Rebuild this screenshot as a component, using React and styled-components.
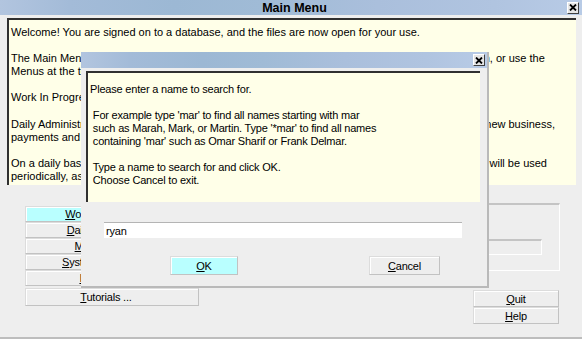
import React from "react"
import styled, {createGlobalStyle} from "styled-components"

const GlobalStyle = createGlobalStyle`
  html, body {
    margin: 0;
    padding: 0;
  }
  body {
    background: #eeeeee;
    font-family: "Liberation Sans", Arial, sans-serif;
    font-size: 11px;
    color: #000;
  }
`

const Window = styled.div`
  position: relative;
  display: flex;
  flex-direction: column;
  box-sizing: border-box;
  width: 582px;
  height: 339px;

  background: #eeeeee;
  border-bottom: 2px solid #bdbdbd;
`
const TitleBar = styled.div`
  display: flex;
  align-items: center;
  flex-shrink: 0;
  height: ${({$h}) => $h || 15}px;
  padding-right: ${({$pr}) => $pr || 3}px;

  background: linear-gradient(90deg, #b2c5df 0%, #a3bbd8 12%, #9cb8d4 30%, #a0bbd6 45%, #aabfdc 65%, #b0c4e0 85%, #b8cbe6 100%);
`
const Title = styled.div`
  flex: 1;
  padding-left: 22px;

  text-align: center;
  font-size: 12.5px;
  font-weight: bold;
`
const CloseButton = styled.div`
  display: flex;
  align-items: center;
  justify-content: center;
  box-sizing: border-box;
  width: 12px;
  height: 12px;

  background: #e6e6e6;
  border-top: 1px solid #ffffff;
  border-left: 1px solid #ffffff;
  border-right: 1px solid #404040;
  border-bottom: 1px solid #404040;
`
const TextPanel = styled.div`
  box-sizing: border-box;
  height: ${({$h}) => $h}px;
  width: ${({$w}) => $w}px;
  margin: ${({$m}) => $m};
  padding: ${({$p}) => $p};
  overflow: hidden;

  background: #ffffe8;
  border-top: 2px solid #303030;
  border-left: 2px solid #303030;

  line-height: ${({$lh}) => $lh || 13}px;
  white-space: ${({$pre}) => $pre ? "pre" : "nowrap"};
  letter-spacing: ${({$ls}) => $ls || 0}px;
`
const Para = styled.p`
  margin: 0 0 13.1px;
`
const Lower = styled.div`
  display: flex;
  flex: 1;
`
const ButtonColumn = styled.div`
  display: flex;
  flex-direction: column;
  width: ${({$w}) => $w}px;
  margin: ${({$m}) => $m};
`
const Button = styled.div`
  display: flex;
  align-items: center;
  justify-content: center;
  box-sizing: border-box;
  width: ${({$w}) => $w ? `${$w}px` : "auto"};
  height: ${({$h}) => $h || 16}px;
  margin-top: ${({$mt}) => $mt || 0}px;
  padding-right: ${({$pr}) => $pr || 0}px;

  background: ${({$active}) => $active ? "#b9ffff" : "#eeeeee"};
  border: 1px solid #c2c2c2;
  border-top-color: #dcdcdc;
  border-left-color: #dcdcdc;
  box-shadow: inset 1px 1px 0 #ffffff;

  white-space: nowrap;
  letter-spacing: -0.2px;
`
const RightArea = styled.div`
  display: flex;
  flex-direction: column;
  align-items: flex-end;
  flex: 1;
  margin-left: 11px;
  padding-right: 22px;
`
const Frame = styled.div`
  display: flex;
  flex-direction: column;
  align-items: flex-end;
  box-sizing: border-box;
  width: 100%;
  height: 68px;
  margin-top: 18px;
  padding-right: 17px;

  border-top: 2px solid #c4c4c4;
  border-left: 2px solid #c4c4c4;
  border-right: 1px solid #ffffff;
  border-bottom: 1px solid #ffffff;
`
const StatusBox = styled.div`
  box-sizing: border-box;
  width: 300px;
  height: 16px;
  margin-top: 34px;

  border-top: 2px solid #c4c4c4;
  border-left: 2px solid #c4c4c4;
  border-right: 1px solid #ffffff;
  border-bottom: 1px solid #ffffff;
`
const Dialog = styled.div`
  position: absolute;
  left: 81px;
  top: 52px;
  display: flex;
  flex-direction: column;
  box-sizing: border-box;
  width: 408px;
  height: 236px;

  background: #eeeeee;
  border-right: 2px solid #b9b9b9;
  border-bottom: 2px solid #b9b9b9;
`
const NameInput = styled.input`
  box-sizing: border-box;
  width: 358px;
  height: 16px;
  margin: 20px 0 0 23px;
  padding: 0 0 0 2px;

  background: #ffffff;
  border: none;
  border-top: 1px solid #b4b4b4;
  outline: none;

  font-family: "Liberation Sans", Arial, sans-serif;
  font-size: 11px;
  letter-spacing: -0.2px;
`
const DialogButtons = styled.div`
  display: flex;
  gap: 131px;
  margin-top: 18px;
  padding-left: 89px;
`

const CloseIcon = () => (
  <svg width="8" height="7" viewBox="0 0 8 7">
    <path d="M1 0.5 L7 6.5 M7 0.5 L1 6.5" stroke="#000" strokeWidth="1.8" />
  </svg>
)

const menuButtons = [
  {label: "Work In Progress", active: true},
  {label: "Daily Processing"},
  {label: "Month End ..."},
  {label: "System Settings ..."},
  {label: "Invoicing ..."},
]

const Label = ({text}) => (
  <span><u>{text[0]}</u>{text.slice(1)}</span>
)

const App = () => {
  return (
    <>
      <GlobalStyle />
      <Window>
        <TitleBar>
          <Title>Main Menu</Title>
          <CloseButton><CloseIcon /></CloseButton>
        </TitleBar>
        <TextPanel $w={569} $h={167} $m="3px 0 0 7px" $p="6px 0 0 2px" $lh={13.1}>
          <Para>Welcome! You are signed on to a database, and the files are now open for your use.</Para>
          <Para>
            The Main Menu buttons below give you access to all of the areas of the program. Click on a button, or use the<br />
            Menus at the top of the screen to move around.
          </Para>
          <Para>Work In Progress shows the jobs that are currently open.</Para>
          <Para>
            Daily Administration is used for the day to day activity of your insurance agency, such as entering new business,<br />
            payments and claims.
          </Para>
          <Para>
            On a daily basis you will mostly use Daily Administration. The other areas of the software program will be used<br />
            periodically, as needed.
          </Para>
        </TextPanel>
        <Lower>
          <ButtonColumn $w={174} $m="21px 0 0 25px">
            {menuButtons.map(b => (
              <Button key={b.label} $active={b.active} $pr={12}><Label text={b.label} /></Button>
            ))}
            <Button $h={18} $mt={2} $pr={12}><Label text="Tutorials ..." /></Button>
          </ButtonColumn>
          <RightArea>
            <Frame>
              <StatusBox />
            </Frame>
            <ButtonColumn $w={86} $m="19px 1px 0 0">
              <Button $h={17}><Label text="Quit" /></Button>
              <Button $h={17}><Label text="Help" /></Button>
            </ButtonColumn>
          </RightArea>
        </Lower>

        <Dialog>
          <TitleBar $h={16} $pr={2}>
            <Title />
            <CloseButton><CloseIcon /></CloseButton>
          </TitleBar>
          <TextPanel $w={394} $h={131} $m="3px 0 0 5px" $p="10px 0 0 2px" $ls={-0.2} $pre>
{`Please enter a name to search for.

 For example type 'mar' to find all names starting with mar
 such as Marah, Mark, or Martin. Type '*mar' to find all names
 containing 'mar' such as Omar Sharif or Frank Delmar.

 Type a name to search for and click OK.
 Choose Cancel to exit.`}
          </TextPanel>
          <NameInput defaultValue="ryan" readOnly />
          <DialogButtons>
            <Button $w={68} $h={19} $active><Label text="OK" /></Button>
            <Button $w={71} $h={19}><Label text="Cancel" /></Button>
          </DialogButtons>
        </Dialog>
      </Window>
    </>
  )
}

export default App
